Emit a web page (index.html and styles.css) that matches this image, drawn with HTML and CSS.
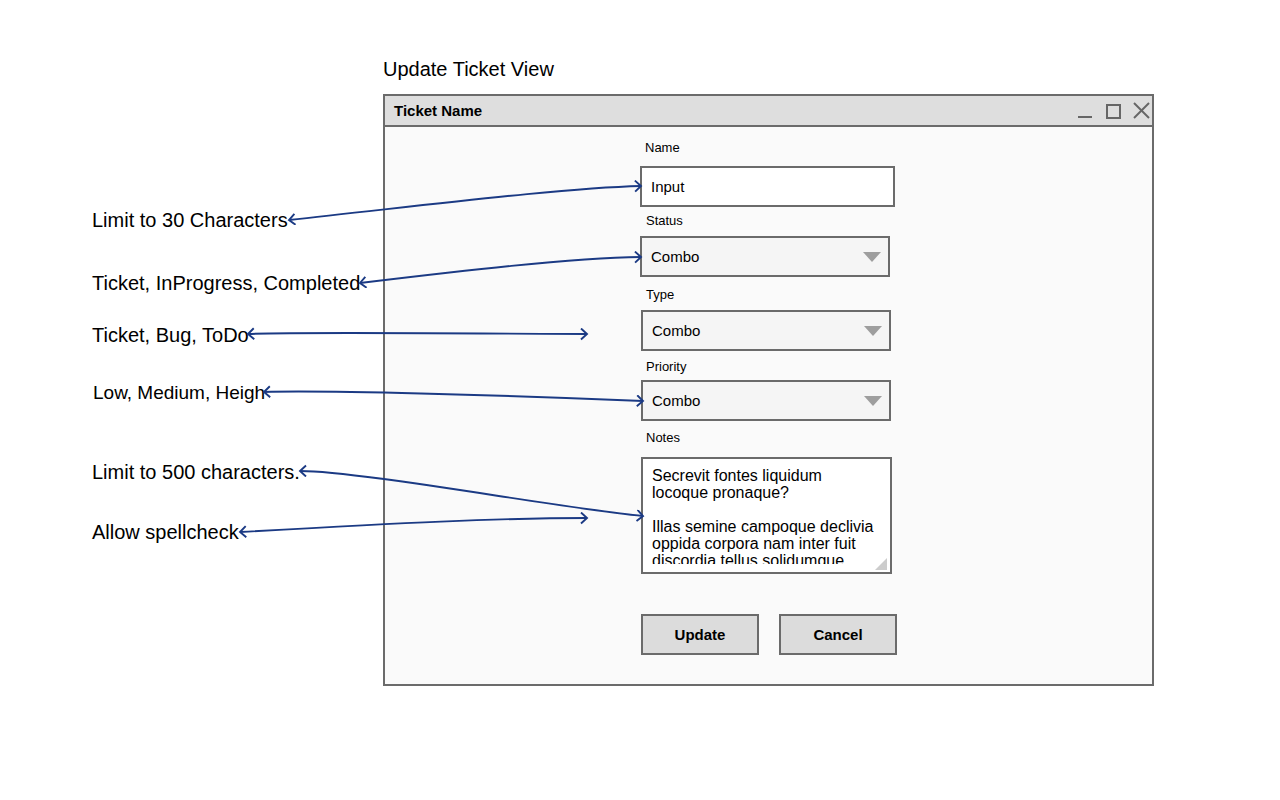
FILE: index.html
```html
<!DOCTYPE html>
<html lang="en">
<head>
<meta charset="utf-8">
<title>Update Ticket View</title>
<link rel="stylesheet" href="styles.css">
</head>
<body>
<div class="canvas">
  <div class="heading">Update Ticket View</div>

  <div class="note n1">Limit to 30 Characters</div>
  <div class="note n2">Ticket, InProgress, Completed</div>
  <div class="note n3">Ticket, Bug, ToDo</div>
  <div class="note n4">Low, Medium, Heigh</div>
  <div class="note n5">Limit to 500 characters.</div>
  <div class="note n6">Allow spellcheck</div>

  <div class="window">
    <div class="titlebar">
      <span class="title">Ticket Name</span>
      <svg class="controls" width="82" height="29" viewBox="0 0 82 29">
        <line x1="8" y1="21" x2="22" y2="21" stroke="#666" stroke-width="2"/>
        <rect x="37" y="9" width="13" height="13" fill="none" stroke="#666" stroke-width="2"/>
        <line x1="64" y1="7" x2="79" y2="22" stroke="#666" stroke-width="2"/>
        <line x1="79" y1="7" x2="64" y2="22" stroke="#666" stroke-width="2"/>
      </svg>
    </div>
    <div class="body">
      <div class="form">
        <div class="lbl l-name">Name</div>
        <div class="field input">Input</div>

        <div class="lbl l-status">Status</div>
        <div class="field combo">Combo<span class="caret"></span></div>

        <div class="lbl l-type">Type</div>
        <div class="field combo shift">Combo<span class="caret"></span></div>

        <div class="lbl l-prio">Priority</div>
        <div class="field combo shift">Combo<span class="caret"></span></div>

        <div class="lbl l-notes">Notes</div>
        <div class="notes">
          <div class="notes-text">Secrevit fontes liquidum locoque pronaque?<br><br>Illas semine campoque declivia oppida corpora nam inter fuit discordia tellus solidumque.</div>
          <span class="grip"></span>
        </div>

        <div class="buttons">
          <div class="btn">Update</div>
          <div class="btn">Cancel</div>
        </div>
      </div>
    </div>
  </div>

  <svg class="arrows" width="1280" height="800" viewBox="0 0 1280 800">
    <defs>
      <marker id="head" markerUnits="userSpaceOnUse" markerWidth="10" markerHeight="14" refX="7" refY="6" orient="auto-start-reverse">
        <path d="M1,0.5 L7,6 L1,11.5" fill="none" stroke="#1b3a84" stroke-width="1.9"/>
      </marker>
    </defs>
    <g fill="none" stroke="#1b3a84" stroke-width="1.9" marker-start="url(#head)" marker-end="url(#head)">
      <path d="M289,220 C420,206 560,188 641,186"/>
      <path d="M360,283 C460,271 570,258 641,257"/>
      <path d="M248,334 C290,332 380,333 587,334"/>
      <path d="M264,392 C320,390 500,395 643,401"/>
      <path d="M300,471 C360,471 560,508 643,516"/>
      <path d="M240,532 C400,523 500,518 587,518"/>
    </g>
  </svg>
</div>
</body>
</html>
```

FILE: styles.css
```css
* { box-sizing: border-box; }

html, body {
  margin: 0;
  padding: 0;
  background: #ffffff;
}

body {
  font-family: "Liberation Sans", Arial, sans-serif;
  color: #000;
}

.canvas {
  position: relative;
  width: 1280px;
  height: 800px;
  overflow: hidden;
}

.heading {
  position: absolute;
  left: 383px;
  top: 57px;
  font-size: 20px;
  line-height: 24px;
}

.note {
  position: absolute;
  left: 92px;
  font-size: 20px;
  line-height: 24px;
  white-space: nowrap;
}
.n1 { top: 208px; }
.n2 { top: 271px; }
.n3 { top: 323px; }
.n4 { top: 381px; left: 93px; font-size: 19px; }
.n5 { top: 460px; }
.n6 { top: 520px; }

.window {
  position: absolute;
  left: 383px;
  top: 94px;
  width: 771px;
  height: 592px;
  border: 2px solid #6b6b6b;
  background: #fafafa;
  display: flex;
  flex-direction: column;
}

.titlebar {
  height: 31px;
  flex: none;
  background: #dedede;
  border-bottom: 2px solid #6b6b6b;
  display: flex;
  align-items: center;
  justify-content: space-between;
  padding-left: 9px;
}

.title {
  font-weight: bold;
  font-size: 15px;
  line-height: 18px;
}

.controls {
  display: block;
  align-self: flex-start;
}

.body {
  flex: 1;
  padding: 13px 0 0 255px;
}

.form {
  display: flex;
  flex-direction: column;
  align-items: flex-start;
}

.lbl {
  font-size: 13px;
  line-height: 16px;
  height: 16px;
  margin-left: 5px;
}
.l-name { margin-bottom: 10px; }
.l-status { margin-top: 6px; margin-bottom: 7px; margin-left: 6px; }
.l-type { margin-top: 10px; margin-bottom: 7px; margin-left: 6px; }
.l-prio { margin-top: 8px; margin-bottom: 5px; margin-left: 6px; }
.l-notes { margin-top: 9px; margin-bottom: 11px; margin-left: 6px; }

.field {
  height: 41px;
  border: 2px solid #6b6b6b;
  font-size: 15px;
  line-height: 18px;
  padding: 0 9px;
  display: flex;
  align-items: center;
}

.input {
  width: 255px;
  background: #ffffff;
}

.combo {
  width: 250px;
  background: #f5f5f5;
  justify-content: space-between;
  padding-right: 7px;
}
.shift { margin-left: 1px; }

.caret {
  width: 0;
  height: 0;
  border-left: 9px solid transparent;
  border-right: 9px solid transparent;
  border-top: 10px solid #9e9e9e;
}

.notes {
  position: relative;
  margin-left: 1px;
  width: 251px;
  height: 117px;
  border: 2px solid #6b6b6b;
  background: #ffffff;
  padding: 8px 9px 8px 9px;
}

.notes-text {
  height: 97px;
  overflow: hidden;
  font-size: 16px;
  line-height: 17px;
}

.grip {
  position: absolute;
  right: 3px;
  bottom: 2px;
  width: 0;
  height: 0;
  border-left: 12px solid transparent;
  border-bottom: 12px solid #cccccc;
}

.buttons {
  display: flex;
  gap: 20px;
  margin-top: 40px;
  margin-left: 1px;
}

.btn {
  width: 118px;
  height: 41px;
  border: 2px solid #6b6b6b;
  background: #dcdcdc;
  font-weight: bold;
  font-size: 15px;
  display: flex;
  align-items: center;
  justify-content: center;
}

.arrows {
  position: absolute;
  left: 0;
  top: 0;
  pointer-events: none;
}
```
